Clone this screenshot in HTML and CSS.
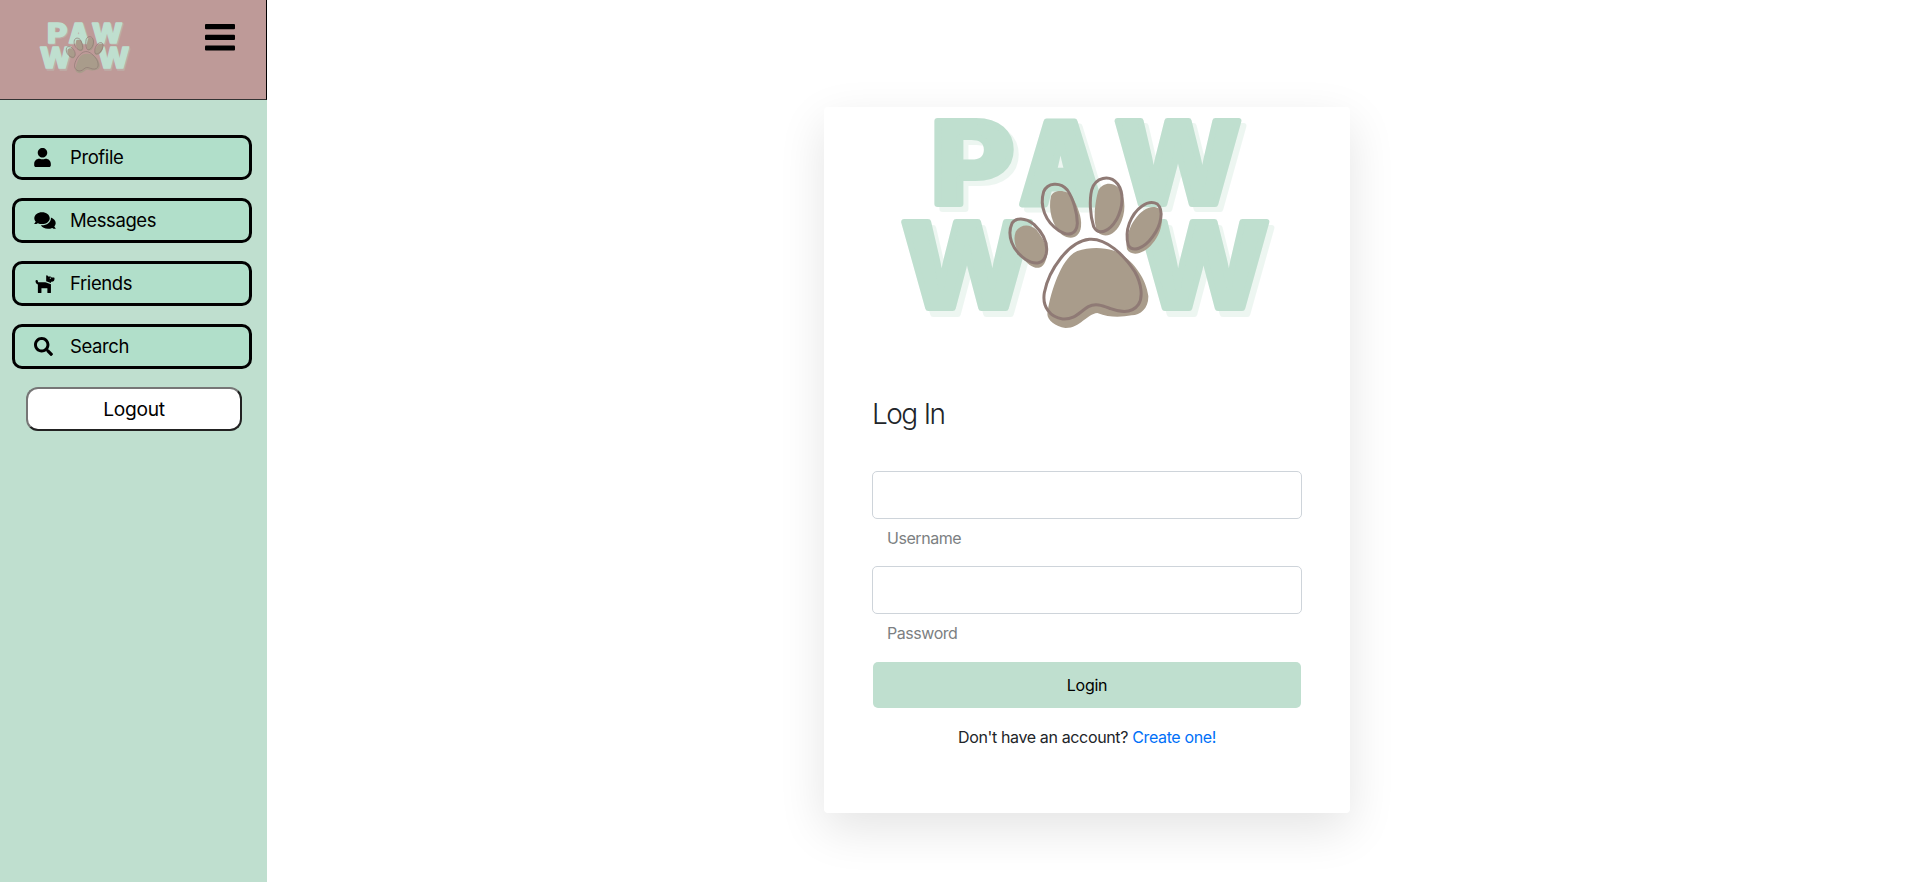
FILE: index.html
```
<!DOCTYPE html>
<html lang="en">
<head>
<meta charset="utf-8">
<title>Paw Wow</title>
<link rel="stylesheet" href="styles.css">
</head>
<body>
<svg class="defs" width="0" height="0" aria-hidden="true">
  <defs>
    <g id="letters">
      <text class="glyph" x="930.500" y="204" font-size="114" textLength="84" lengthAdjust="spacingAndGlyphs">P</text>
      <text class="glyph glyph-a" x="1020" y="203.500" font-size="113" textLength="82" lengthAdjust="spacingAndGlyphs">A</text>
      <text class="glyph" x="1115" y="204" font-size="114" textLength="126" lengthAdjust="spacingAndGlyphs">W</text>
    </g>
    <g id="letters-low">
      <text class="glyph" x="901.500" y="308" font-size="118" textLength="131" lengthAdjust="spacingAndGlyphs">W</text>
      <text class="glyph" x="1138" y="308" font-size="118" textLength="131" lengthAdjust="spacingAndGlyphs">W</text>
    </g>
    <g id="paw" transform="translate(990 160) scale(.33333)">
      <g class="pad">
        <path d="M77 215C90 192 120 190 140 210C162 238 176 266 170 290C163 328 140 330 118 314C88 290 64 250 77 215Z"/>
        <path d="M183 108C190 88 232 86 248 112C262 140 276 170 273 200C268 236 240 240 216 224C186 196 174 150 183 108Z"/>
        <path d="M325 92C336 68 365 66 382 80C404 100 410 145 395 182C380 220 350 238 325 218C306 190 316 120 325 92Z"/>
        <path d="M435 178C455 148 485 132 508 146C524 170 515 220 488 250C462 284 424 290 411 268C406 240 418 200 435 178Z"/>
        <path d="M262 273C295 262 335 260 372 272C420 290 468 350 475 408C476 445 452 465 425 466C395 471 360 474 322 459C290 462 270 505 226 504C196 500 172 480 172 462C180 400 214 292 262 273Z"/>
      </g>
      <g class="pad-line">
        <path d="M66 190C76 172 106 172 132 193C162 222 174 252 169 280C162 314 135 316 106 298C66 270 50 225 66 190Z"/>
        <path d="M161 95C172 68 210 64 232 90C250 116 262 160 262 190C260 224 236 230 207 212C166 186 148 138 161 95Z"/>
        <path d="M305 90C316 52 358 42 383 72C402 98 400 140 380 178C358 216 325 228 311 200C300 166 298 120 305 90Z"/>
        <path d="M418 190C434 146 474 116 502 132C522 150 514 196 488 230C462 266 428 278 415 256C410 238 410 212 418 190Z"/>
        <path d="M298 238C348 234 402 284 435 336C454 370 460 412 445 434C428 458 395 458 362 446C340 438 318 428 295 440C268 456 254 480 218 477C180 472 156 440 163 398C176 330 236 244 298 238Z"/>
      </g>
    </g>
    <symbol id="logo" viewBox="824 107 526 260">
      <use href="#letters" class="logo-shade" x="5" y="5"/>
      <use href="#letters" class="logo-ink"/>
      <use href="#letters-low" class="logo-shade" x="5" y="6"/>
      <use href="#letters-low" class="logo-ink"/>
      <use href="#paw"/>
    </symbol>
  </defs>
</svg>

<div class="app">
  <aside class="sidebar">
    <header class="brand">
      <svg class="brand-logo" role="img" aria-label="Paw Wow"><use href="#logo"/></svg>
      <svg class="menu" viewBox="0 0 30 27"><rect width="30" height="5.2" rx="1"/><rect y="10.7" width="30" height="5.2" rx="1"/><rect y="21.4" width="30" height="5.2" rx="1"/></svg>
    </header>
    <nav class="nav">
      <a class="nav-item"><svg class="icon user" viewBox="0 0 448 512"><path d="M224 256c70.700 0 128-57.300 128-128S294.700 0 224 0 96 57.300 96 128s57.300 128 128 128zm89.600 32h-16.700c-22.200 10.200-46.900 16-72.900 16s-50.600-5.800-72.900-16h-16.700C60.200 288 0 348.200 0 422.400V464c0 26.500 21.500 48 48 48h352c26.500 0 48-21.500 48-48v-41.600c0-74.200-60.200-134.400-134.400-134.400z"/></svg><span>Profile</span></a>
      <a class="nav-item"><svg class="icon chat" viewBox="0 0 576 512"><path d="M416 192c0-88.400-93.100-160-208-160S0 103.600 0 192c0 34.300 14.100 65.900 38 92-13.400 30.200-35.500 54.200-35.800 54.500-2.200 2.300-2.800 5.700-1.500 8.700S4.800 352 8 352c36.600 0 66.900-12.300 88.700-25 32.200 15.700 70.300 25 111.300 25 114.900 0 208-71.600 208-160zm122 220c23.900-26 38-57.700 38-92 0-66.900-53.500-124.200-129.300-148.100.9 6.600 1.300 13.300 1.300 20.100 0 105.900-107.700 192-240 192-10.800 0-21.300-.8-31.700-1.900C207.800 439.600 281.800 480 368 480c41 0 79.100-9.200 111.300-25 21.800 12.700 52.100 25 88.700 25 3.200 0 6.100-1.900 7.300-4.800 1.300-2.900.7-6.300-1.500-8.700-.3-.3-22.400-24.200-35.800-54.500z"/></svg><span>Messages</span></a>
      <a class="nav-item"><svg class="icon dog" viewBox="0 0 576 512"><path d="M298.100 224L448 277.600V496a16 16 0 0 1-16 16h-64a16 16 0 0 1-16-16V384H192v112a16 16 0 0 1-16 16h-64a16 16 0 0 1-16-16V282.100C58.800 268.800 32 233.700 32 192a32 32 0 0 1 64 0 32.100 32.100 0 0 0 32 32zM544 112v32a64 64 0 0 1-64 64h-32v35.600l-128-45.700V48c0-14.300 17.200-21.400 27.300-11.300L374.600 64h53.600c10.900 0 23.800 7.900 28.600 17.700L464 96h64a16 16 0 0 1 16 16zm-96 0a16 16 0 1 0-16 16 16 16 0 0 0 16-16z"/></svg><span>Friends</span></a>
      <a class="nav-item"><svg class="icon find" viewBox="0 0 512 512"><path d="M505 442.700L405.300 343c-4.500-4.500-10.600-7-17-7H372c27.600-35.300 44-79.700 44-128C416 93.100 322.900 0 208 0S0 93.100 0 208s93.100 208 208 208c48.300 0 92.700-16.400 128-44v16.300c0 6.400 2.500 12.500 7 17l99.700 99.700c9.400 9.400 24.600 9.400 33.900 0l28.300-28.300c9.400-9.400 9.400-24.600.1-34zM208 336c-70.700 0-128-57.200-128-128 0-70.700 57.200-128 128-128 70.700 0 128 57.200 128 128 0 70.700-57.200 128-128 128z"/></svg><span>Search</span></a>
      <button class="logout">Logout</button>
    </nav>
  </aside>
  <main class="main">
    <section class="card">
      <svg class="hero-logo" role="img" aria-label="Paw Wow"><use href="#logo"/></svg>
      <form class="form">
        <h1 class="title">Log In</h1>
        <input class="field" type="text" id="username">
        <label class="label" for="username">Username</label>
        <input class="field" type="password" id="password">
        <label class="label" for="password">Password</label>
        <button class="login" type="button">Login</button>
        <p class="signup">Don't have an account? <a class="link">Create one!</a></p>
      </form>
    </section>
  </main>
</div>
</body>
</html>
```
FILE: styles.css
```
* { box-sizing: border-box; }
body { margin: 0; background: #fff; font-family: Inter, "Liberation Sans", sans-serif; color: #212529; }
.defs { position: absolute; }
.app { display: flex; height: 882px; overflow: hidden; }

.sidebar { width: 267px; background: #bfdfcf; }
.brand { display: flex; justify-content: space-between; align-items: flex-start; height: 100px; padding: 19px 31px 0 21px; background: #be9a98; border-right: 1px solid #000; border-bottom: 1px solid #333; }
.brand-logo { width: 128px; height: 64px; }
.menu { width: 30px; height: 27px; margin-top: 5px; }

.nav { display: flex; flex-direction: column; gap: 18px; padding: 35px 15px 0 12px; }
.nav-item { display: flex; align-items: center; height: 45px; padding-left: 19px; border: 3px solid #000; border-radius: 10px; background: #b1dfca; color: #000; font-size: 18.5px; letter-spacing: -0.4px; }
.nav-item span { margin-left: 14px; padding-bottom: 2px; }
.icon { height: 19px; width: 22px; overflow: visible; }
.user { padding-right: 5px; }
.find { padding-right: 3px; }
.logout { height: 44px; margin: 0 10px 0 14px; border: 2px solid; border-color: #767676 #222 #222 #767676; border-radius: 12px; background: #fff; color: #000; font: 19.2px Inter, sans-serif; letter-spacing: -0.3px; }

.main { flex: 1; display: flex; justify-content: center; align-items: flex-start; padding: 107px 10px 0 0; }
.card { width: 526px; height: 706px; border-radius: 4px; background: #fff; box-shadow: 0 16px 48px rgba(0, 0, 0, .11); }
.hero-logo { display: block; width: 526px; height: 260px; }
.form { display: flex; flex-direction: column; padding: 30px 48px 0; }
.title { margin: 0 0 40px; font-size: 28px; font-weight: 350; line-height: 34px; letter-spacing: -1.6px; word-spacing: 1px; }
.field { height: 48px; border: 1px solid #ced4da; border-radius: 5px; background: #fff; }
.label { margin: 7px 0 16px 15px; font-size: 16px; line-height: 24px; letter-spacing: -0.45px; color: #7c7f82; }
.login { height: 46px; margin: 1px 1px 0; border: 0; border-radius: 5px; background: #bfdfcf; color: #000; font: 16px Inter, sans-serif; letter-spacing: -0.3px; }
.signup { margin: 17px 0 0; font-size: 16px; line-height: 24px; letter-spacing: -0.36px; text-align: center; }
.link { color: #0070f8; }

.glyph { font-family: Inter, sans-serif; font-weight: 770; stroke-width: 6; stroke-linejoin: round; }
.glyph-a { font-weight: 900; stroke-width: 7; }
.logo-ink { fill: #bfdfcf; stroke: #bfdfcf; }
.logo-shade { fill: #bfdfcf; stroke: #bfdfcf; opacity: .27; }
.pad { fill: #a99c8b; }
.pad-line { fill: none; stroke: #8f7a75; stroke-width: 9; }
```
